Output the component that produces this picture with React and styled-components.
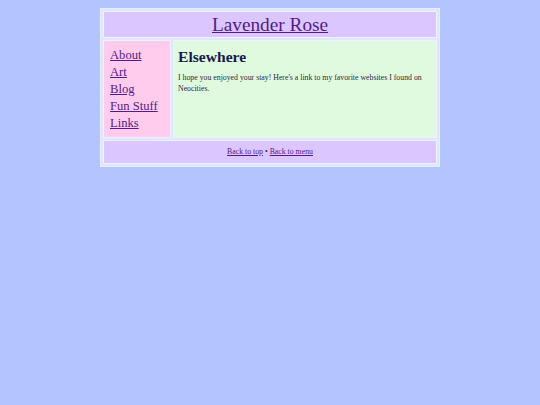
import React from "react";
import styled, { createGlobalStyle } from "styled-components";

const GlobalStyle = createGlobalStyle`
	body {
		margin: 8px;
		background: #b4c4ff;
		font-family: "Liberation Serif", "Times New Roman", serif;
	}
	a {
		color: #551a8b;
	}
`;

const App = () => {
	return (
		<>
			<GlobalStyle />
			<Layout>
				<Header>
					<a href="#top">Lavender Rose</a>
				</Header>
				<Sidebar>
					<a href="#about">About</a>
					<a href="#art">Art</a>
					<a href="#blog">Blog</a>
					<a href="#fun">Fun Stuff</a>
					<a href="#links">Links</a>
				</Sidebar>
				<Content>
					<Title>Elsewhere</Title>
					<Text>
						I hope you enjoyed your stay! Here's a link to my favorite websites I
						found on Neocities.
					</Text>
				</Content>
				<Footer>
					<a href="#top">Back to top</a> • <a href="#menu">Back to menu</a>
				</Footer>
			</Layout>
		</>
	);
};

export default App;

//STYLES
const Layout = styled.div`
	width: 334px;
	margin: 0 auto;
	padding: 2px;
	border: 1px solid #e8eeff;
	background: #dfe6ff;
	display: grid;
	grid-template-columns: 68px 1fr;
	gap: 2px;
`;

const Cell = styled.div`
	border: 1px solid #eef2ff;
	box-sizing: border-box;
`;

const Header = styled(Cell)`
	grid-column: 1 / 3;
	background: #dcc6ff;
	text-align: center;
	font-size: 19.3px;
	height: 27px;
	line-height: 25px;
`;

const Sidebar = styled(Cell)`
	background: #ffccee;
	padding: 6px 6px 4px;
	display: flex;
	flex-direction: column;
	font-size: 12.6px;
	line-height: 17px;
	height: 98px;
`;

const Content = styled(Cell)`
	background: #e0fae0;
	padding: 5px 4px;
	color: #2a2a3a;
`;

const Title = styled.h2`
	margin: 2px 0 6px;
	font-size: 15.6px;
	color: #1a1a4a;
`;

const Text = styled.p`
	margin: 0;
	font-size: 7.8px;
	line-height: 11px;
`;

const Footer = styled(Cell)`
	grid-column: 1 / 3;
	background: #dcc6ff;
	text-align: center;
	font-size: 7.8px;
	height: 24px;
	line-height: 22px;
	color: #333;
`;
